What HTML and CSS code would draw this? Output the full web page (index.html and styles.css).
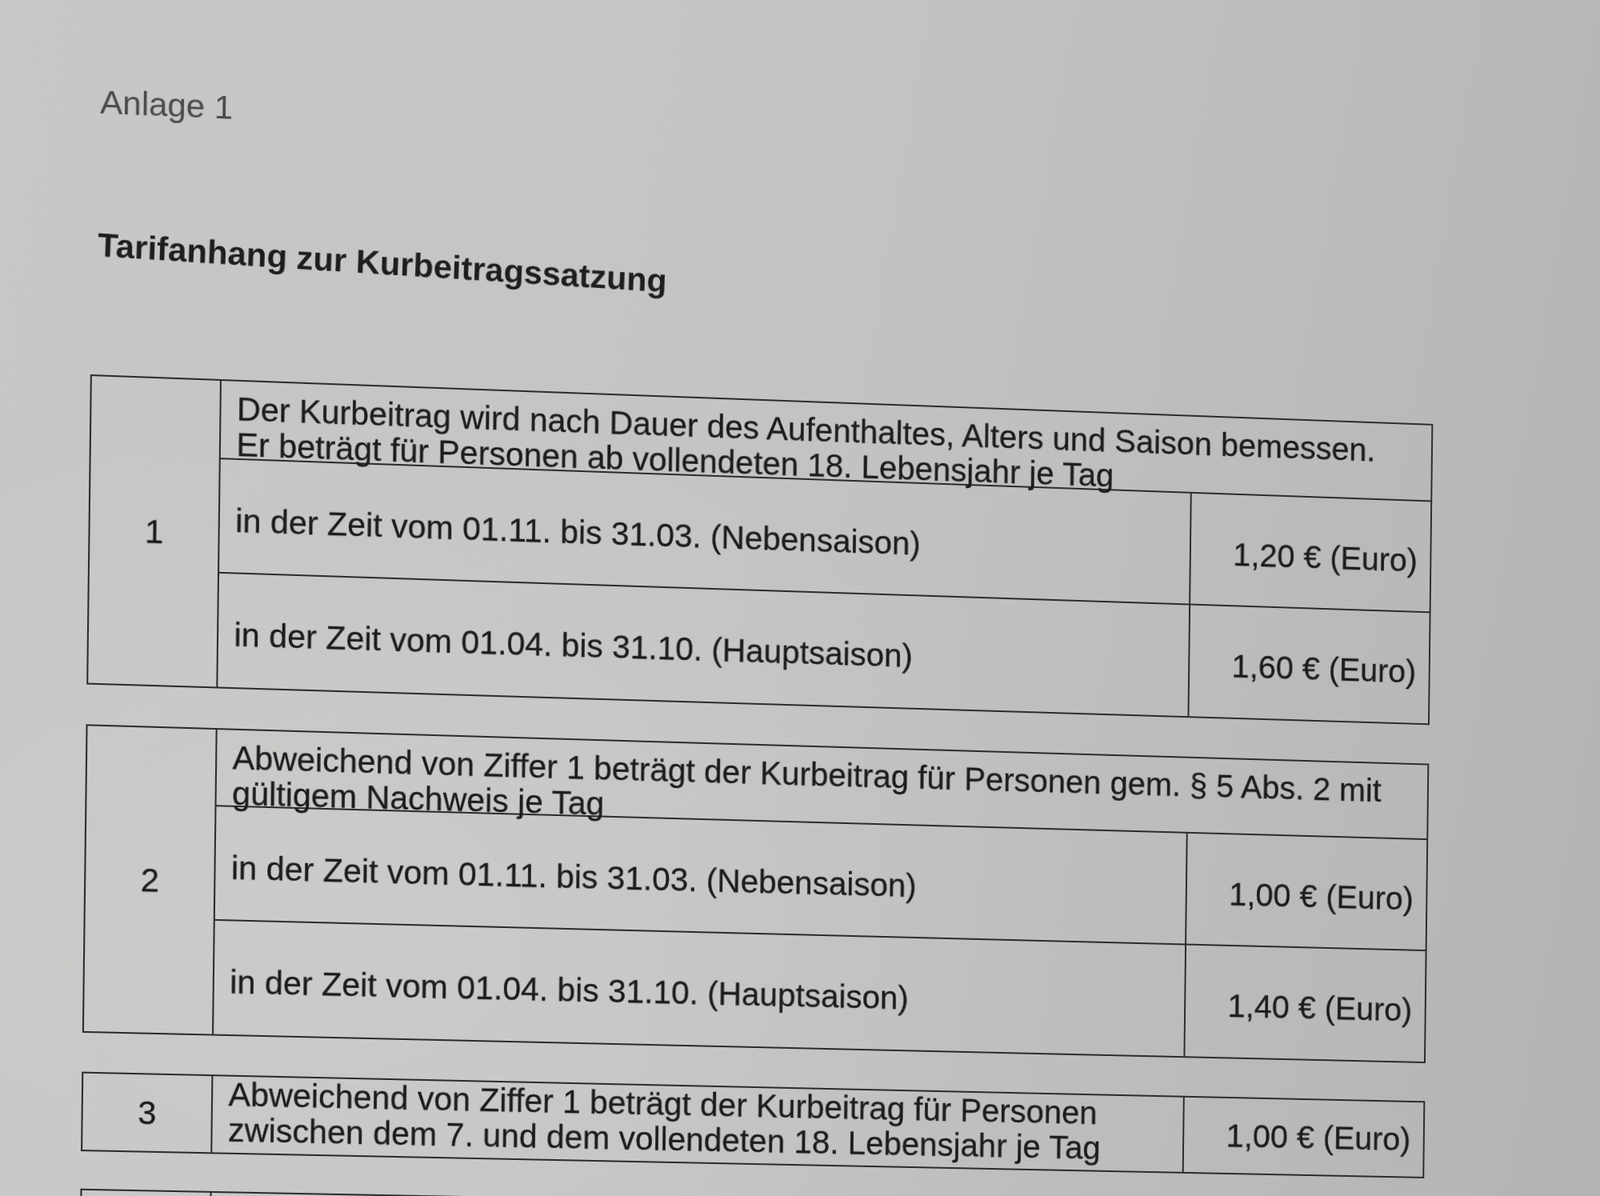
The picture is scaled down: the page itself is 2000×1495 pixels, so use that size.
FILE: index.html
```html
<!DOCTYPE html>
<html lang="de">
<head>
<meta charset="utf-8">
<title>Anlage 1 – Tarifanhang zur Kurbeitragssatzung</title>
<link rel="stylesheet" href="styles.css">
</head>
<body>
<div class="sheet">
  <p class="anlage">Anlage 1</p>
  <h1 class="title">Tarifanhang zur Kurbeitragssatzung</h1>
  <section class="tables">
    <div class="tbl tbl-1">
      <div class="cell num">1</div>
      <div class="cell head">Der Kurbeitrag wird nach Dauer des Aufenthaltes, Alters und Saison bemessen.<br>Er beträgt für Personen ab vollendeten 18. Lebensjahr je Tag</div>
      <div class="cell txt">in der Zeit vom 01.11. bis 31.03. (Nebensaison)</div>
      <div class="cell val">1,20 € (Euro)</div>
      <div class="cell txt">in der Zeit vom 01.04. bis 31.10. (Hauptsaison)</div>
      <div class="cell val">1,60 € (Euro)</div>
    </div>
    <div class="tbl tbl-2">
      <div class="cell num">2</div>
      <div class="cell head">Abweichend von Ziffer 1 beträgt der Kurbeitrag für Personen gem. § 5 Abs. 2 mit<br>gültigem Nachweis je Tag</div>
      <div class="cell txt">in der Zeit vom 01.11. bis 31.03. (Nebensaison)</div>
      <div class="cell val">1,00 € (Euro)</div>
      <div class="cell txt">in der Zeit vom 01.04. bis 31.10. (Hauptsaison)</div>
      <div class="cell val">1,40 € (Euro)</div>
    </div>
    <div class="tbl tbl-3">
      <div class="cell num">3</div>
      <div class="cell txt">Abweichend von Ziffer 1 beträgt der Kurbeitrag für Personen<br>zwischen dem 7. und dem vollendeten 18. Lebensjahr je Tag</div>
      <div class="cell val">1,00 € (Euro)</div>
    </div>
    <div class="tbl tbl-4">
      <div class="cell num"></div>
      <div class="cell txt"></div>
      <div class="cell val"></div>
    </div>
  </section>
</div>
</body>
</html>
```
FILE: styles.css
```css
html, body {
  margin: 0;
  height: 1495px;
  overflow: hidden;
}

body {
  font-family: "Liberation Sans", Arial, sans-serif;
  color: #1c1c1c;
  background:
    radial-gradient(ellipse 1300px 1000px at 22% 78%, rgba(255, 255, 255, 0.10), rgba(255, 255, 255, 0) 70%),
    linear-gradient(100deg, #c7c7c5 0%, #c4c4c2 45%, #bcbcbb 74%, #b3b3b3 100%);
}

/* the sheet of paper, photographed at a slight angle */
.sheet {
  width: 2000px;
  height: 1620px;
  box-sizing: border-box;
  padding: 140px 0 0 119px;
  transform-origin: 950px 950px;
  transform: perspective(2000px) rotateY(2deg) matrix(1, 0.029, -0.012, 1, 0, 0);
  filter: blur(0.4px);
}

.anlage {
  margin: 0 0 0 8px;
  font-size: 41px;
  line-height: 47px;
  color: #4b4b4b;
}

.title {
  margin: 129px 0 0 7px;
  font-size: 41px;
  line-height: 47px;
  font-weight: bold;
  color: #1e1e1e;
  transform: rotate(1.4deg);
  transform-origin: 0 50%;
}

.tables {
  margin-top: 136px;
  width: 1680px;
}

.tbl {
  display: grid;
  grid-template-columns: 158px 1212px 308px;
  border-top: 2px solid #2b2b2b;
  border-left: 2px solid #2b2b2b;
  font-size: 40.5px;
  line-height: 44px;
  -webkit-text-stroke: 0.3px #1c1c1c;
}

.tbl-1 {
  grid-template-rows: 97px 141px 142px;
}

.tbl-2 {
  grid-template-rows: 95px 141px 142px;
  margin-top: 49px;
}

.tbl-3 {
  grid-template-rows: 96px;
  margin-top: 48px;
}

.tbl-4 {
  grid-template-rows: 96px;
  margin-top: 46px;
}

.cell {
  box-sizing: border-box;
  min-width: 0;
  border-right: 2px solid #2b2b2b;
  border-bottom: 2px solid #2b2b2b;
  white-space: nowrap;
}

.num {
  grid-row: 1 / -1;
  display: flex;
  align-items: center;
  justify-content: center;
}

.head {
  grid-column: 2 / 4;
  padding: 12px 0 0 19px;
}

.txt {
  display: flex;
  align-items: center;
  padding: 10px 0 0 19px;
}

.val {
  display: flex;
  align-items: center;
  justify-content: flex-end;
  padding: 10px 16px 0 0;
}

.tbl-3 .txt {
  align-items: flex-start;
  padding-top: 0;
}

.tbl-3 .val {
  padding-top: 0;
}
```
